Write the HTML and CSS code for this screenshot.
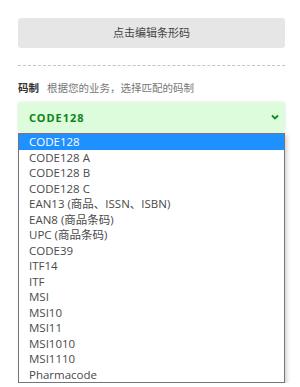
FILE: index.html
```html
<!DOCTYPE html>
<html lang="zh-CN">
<head>
	<meta charset="UTF-8">
	<title>条形码</title>
	<link rel="stylesheet" href="styles.css">
</head>
<body>
	<div class="wrap">
		<div class="editBtn">点击编辑条形码</div>
		<div class="line"></div>
		<div class="label"><b>码制</b><span>根据您的业务，选择匹配的码制</span></div>
		<div class="select">
			<span class="cur">CODE128</span>
			<svg class="arrow" width="8" height="6" viewBox="0 0 8 6"><path d="M1 1.5 L4 4.5 L7 1.5" fill="none" stroke="#118a1e" stroke-width="1.8"/></svg>
		</div>
		<ul class="list">
			<li class="on">CODE128</li>
			<li>CODE128 A</li>
			<li>CODE128 B</li>
			<li>CODE128 C</li>
			<li>EAN13 (商品、ISSN、ISBN)</li>
			<li>EAN8 (商品条码)</li>
			<li>UPC (商品条码)</li>
			<li>CODE39</li>
			<li>ITF14</li>
			<li>ITF</li>
			<li>MSI</li>
			<li>MSI10</li>
			<li>MSI11</li>
			<li>MSI1010</li>
			<li>MSI1110</li>
			<li>Pharmacode</li>
		</ul>
	</div>
</body>
</html>
```

FILE: styles.css
```css
*{
	padding:0;
	margin:0;
	box-sizing:border-box;
}
body{
	background:#fff;
	font-family:"Noto Sans","Noto Sans CJK SC",sans-serif;
	color:#333;
}
.wrap{
	padding:18px 15px 0 18px;
}
.editBtn{
	height:30px;
	line-height:30px;
	background:#e6e6e6;
	border-radius:3px;
	text-align:center;
	font-size:11px;
	color:#444;
}
.line{
	margin-top:17px;
	border-top:1px dashed #c4c4c4;
}
.label{
	margin-top:14px;
	height:16px;
	line-height:16px;
	font-size:10.5px;
}
.label b{
	font-weight:bold;
	color:#333;
	margin-right:8px;
}
.label span{
	color:#777;
}
.select{
	margin-top:6px;
	height:30px;
	background:#dcfcdc;
	border-radius:3px;
	box-shadow:0 0 3px rgba(0,0,0,0.12);
	display:flex;
	align-items:center;
	justify-content:space-between;
	padding:0 6px 0 11px;
}
.cur{
	font-size:11px;
	font-weight:bold;
	letter-spacing:1px;
	color:#0e8419;
}
.list{
	list-style:none;
	margin-top:1px;
	border:1px solid #767676;
	box-shadow:2px 2px 4px rgba(0,0,0,0.18);
	background:#fff;
	font-family:"Open Sans","Noto Sans CJK SC",sans-serif;
	font-size:11.5px;
	color:#4a4a4a;
}
.list li{
	height:15.5px;
	line-height:15.5px;
	padding-left:10px;
	white-space:nowrap;
}
.list li.on{
	background:#1e90ff;
	color:#fff;
}
```
